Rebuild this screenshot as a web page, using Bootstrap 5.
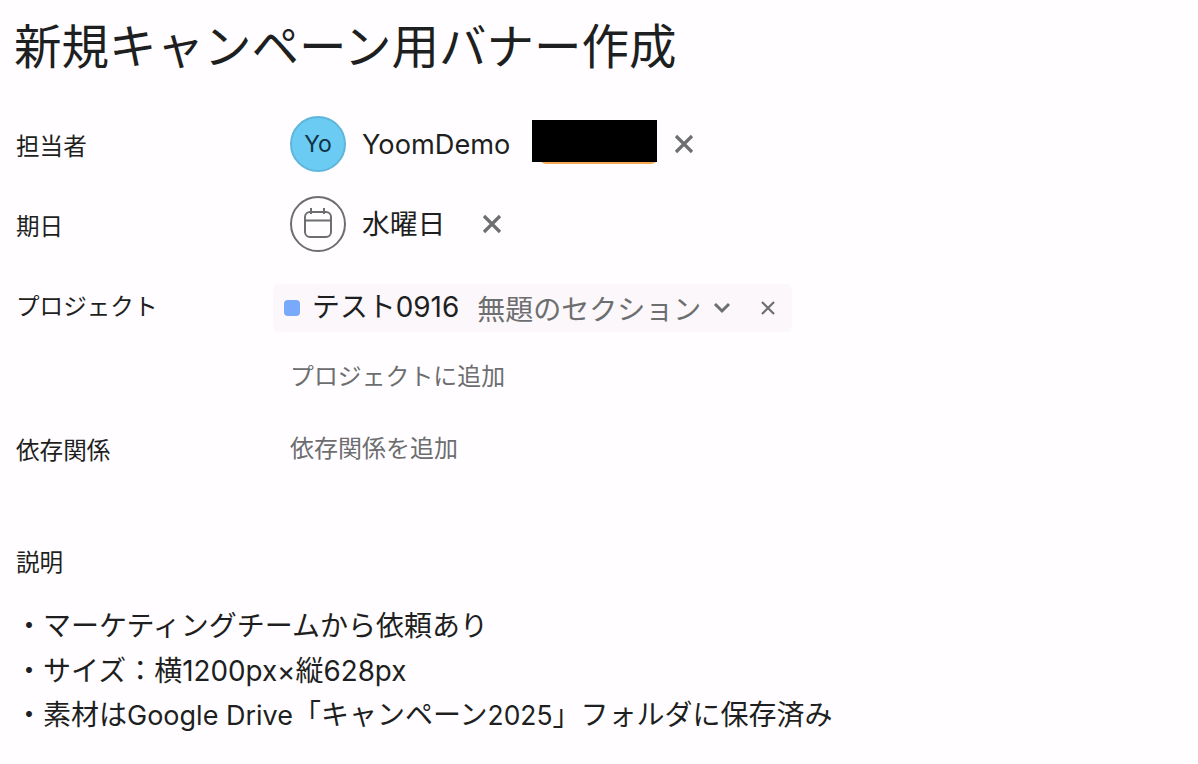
<!DOCTYPE html>
<html lang="ja">
<head>
<meta charset="UTF-8">
<title>タスク詳細</title>
<link rel="stylesheet" href="https://cdn.jsdelivr.net/npm/bootstrap@5.3.3/dist/css/bootstrap.min.css">
<style>
body { background: #fffdff; color: #1e1f21; font-family: "Inter", "Noto Sans CJK JP", sans-serif; overflow: hidden; }
.task-page { padding: 12px 0 0 14px; }
.task-title { font-size: 47.5px; line-height: 64px; font-weight: 400; margin: 0 0 40px 0; color: #1e1f21; font-family: "Noto Sans CJK JP", sans-serif; }
.field-row { display: flex; align-items: center; padding-left: 2px; }
.row-person { height: 56px; margin-bottom: 24px; }
.row-date { height: 56px; margin-bottom: 32px; }
.row-project { height: 48px; margin-bottom: 22px; }
.row-add { height: 44px; margin-bottom: 28px; }
.row-dep { height: 44px; margin-bottom: 75px; }
.field-label { width: 257px; flex: none; padding-top: 1px; font-size: 23.6px; line-height: 32px; font-family: "Noto Sans CJK JP", sans-serif; }
.label-project { padding-top: 0; margin-top: -6px; }
.person-value { margin-left: 17px; }
.avatar-circle { width: 56px; height: 56px; border-radius: 50%; display: flex; align-items: center; justify-content: center; flex: none; font-size: 23px; }
.avatar-yo { background: #6ccbf2; border: 2px solid #5fb6da; color: #0f3345; padding-top: 1px; }
.avatar-date { border: 2px solid #6d6e6f; }
.value-text { font-size: 27.2px; line-height: 36px; margin-left: 16px; padding-top: 2px; white-space: nowrap; }
.name-text { width: 170px; }
.date-text { width: 119px; font-size: 27.8px; padding-top: 0; }
.redact-wrap { width: 125px; height: 44px; flex: none; position: relative; margin-top: -4px; }
.redact-line { position: absolute; left: 8px; right: 0; bottom: 0; height: 6px; background: #f5a952; border-radius: 0 0 6px 6px; }
.redact-box { position: absolute; inset: 0 0 2px 0; background: #000; }
.x-icon { width: 22px; height: 22px; flex: none; }
.x-person { margin-left: 16px; }
.project-chip { background: #fbf7fb; border-radius: 6px; height: 48px; width: 519px; flex: none; display: flex; align-items: center; padding-left: 11px; }
.project-dot { width: 16px; height: 16px; border-radius: 4px; background: #79a9fb; margin-right: 12px; flex: none; }
.project-name { font-size: 27.9px; margin-right: 18px; white-space: nowrap; }
.section-name { color: #6d6e6f; font-size: 28px; white-space: nowrap; font-family: "Noto Sans CJK JP", sans-serif; }
.chev-icon { width: 20px; height: 12px; margin-left: 11px; flex: none; }
.x-small { width: 16px; height: 16px; margin-left: 28px; flex: none; }
.muted-link { color: #6d6e6f; font-size: 24px; padding-bottom: 2px; font-family: "Noto Sans CJK JP", sans-serif; }
.muted-pad { margin-left: 17px; }
.muted-add { margin-left: 274px; font-size: 23.9px; }
.desc-label { font-size: 23.6px; line-height: 32px; padding-left: 2px; margin-bottom: 27px; font-family: "Noto Sans CJK JP", sans-serif; }
.desc-body { font-size: 28px; line-height: 44.6px; padding-left: 1px; white-space: nowrap; }
.desc-line { height: 44.6px; }
.latin-run { font-size: 27px; }
.latin-wide { font-size: 27.8px; }
.latin-num { font-size: 26.4px; }
</style>
</head>
<body>
<div class="task-page">
  <h1 class="task-title">新規キャンペーン用バナー作成</h1>

  <div class="field-row row-person">
    <div class="field-label">担当者</div>
    <div class="d-flex align-items-center person-value">
      <div class="avatar-circle avatar-yo">Yo</div>
      <div class="value-text name-text">YoomDemo</div>
      <div class="redact-wrap"><div class="redact-line"></div><div class="redact-box"></div></div>
      <svg class="x-icon x-person" viewBox="0 0 22 22"><path d="M3 3L19 19M19 3L3 19" stroke="#6d6e6f" stroke-width="3.2"/></svg>
    </div>
  </div>

  <div class="field-row row-date">
    <div class="field-label">期日</div>
    <div class="d-flex align-items-center person-value">
      <div class="avatar-circle avatar-date">
        <svg width="30" height="32" viewBox="0 0 30 32" fill="none" stroke="#6d6e6f" stroke-width="2"><rect x="2" y="4" width="26" height="25" rx="5"/><path d="M2 12.5H28M8 0V6M21 0V6"/></svg>
      </div>
      <div class="value-text date-text">水曜日</div>
      <svg class="x-icon" viewBox="0 0 22 22"><path d="M3 3L19 19M19 3L3 19" stroke="#6d6e6f" stroke-width="3.2"/></svg>
    </div>
  </div>

  <div class="field-row row-project">
    <div class="field-label label-project">プロジェクト</div>
    <div class="project-chip">
      <span class="project-dot"></span>
      <span class="project-name">テスト0916</span>
      <span class="section-name">無題のセクション</span>
      <svg class="chev-icon" viewBox="0 0 20 12" fill="none"><path d="M3 2L10 9L17 2" stroke="#6d6e6f" stroke-width="3"/></svg>
      <svg class="x-small" viewBox="0 0 16 16"><path d="M2 2L14 14M14 2L2 14" stroke="#6d6e6f" stroke-width="2.2"/></svg>
    </div>
  </div>

  <div class="field-row row-add">
    <div class="muted-link muted-add">プロジェクトに追加</div>
  </div>

  <div class="field-row row-dep">
    <div class="field-label">依存関係</div>
    <div class="muted-link muted-pad">依存関係を追加</div>
  </div>

  <div class="desc-label">説明</div>
  <div class="desc-body">
    <div class="desc-line">・マーケティングチームから依頼あり</div>
    <div class="desc-line">・サイズ：横<span class="latin-wide">1200px×</span>縦<span class="latin-wide">628px</span></div>
    <div class="desc-line">・素材は<span class="latin-run">Google Drive</span>「キャンペーン<span class="latin-num">2025</span>」フォルダに保存済み</div>
  </div>
</div>
</body>
</html>
